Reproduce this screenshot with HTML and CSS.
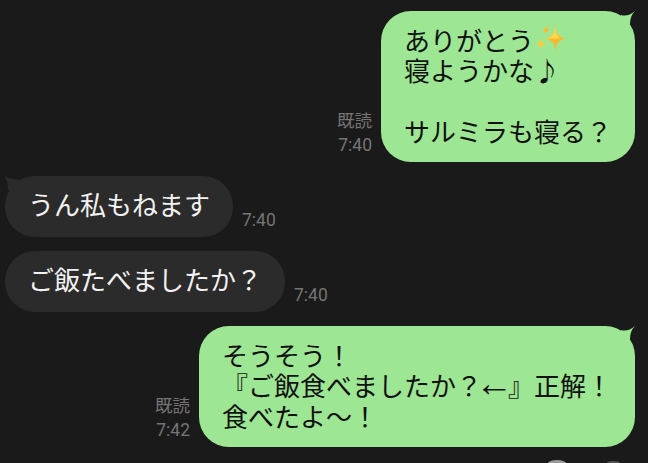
FILE: index.html
```html
<!DOCTYPE html>
<html lang="ja">
<head>
    <meta charset="UTF-8">
    <meta name="viewport" content="width=device-width, initial-scale=1.0">
    <title>トーク</title>
    <link rel="stylesheet" href="styles.css">
</head>
<body>
    <div class="chat">
        <div class="row row-me">
            <div class="meta">
                <div>既読</div>
                <div>7:40</div>
            </div>
            <div class="bubble bubble-me">
                <svg class="tail" width="16" height="14" viewBox="0 0 16 14"><path d="M2 5Q9 7 16 1 11 6 11 14L2 14Z" /></svg>
                <div>ありがとう<svg class="sparkle" width="30" height="29" viewBox="0 0 30 29"><path fill="#fdb92e" d="M19.500 0C20 9 21 12 29 14.500 21 17 20 20 19.500 28 19 20 17 17 10 14.500 17 12 19 9 19.500 0Z"/><path fill="#fed64a" d="M19.500 0C20 9 20.500 12 24 13.500L19.500 14.500 10 14.500C17 12 19 9 19.500 0Z"/><path fill="#fdb92e" d="M10 1C10.500 4 11 5 13.500 6 11 7 10.500 8 10 10.500 9.500 8 9 7 6.500 6 9 5 9.500 4 10 1Z"/><path fill="#fdc93a" d="M5 14C5.500 18 6.500 19 10.500 20 6.500 21 5.500 22 5 26 4.500 22 3.500 21 0 20 3.500 19 4.500 18 5 14Z"/></svg></div>
                <div>寝ようかな♪</div>
                <div>&nbsp;</div>
                <div>サルミラも寝る？</div>
            </div>
        </div>

        <div class="row">
            <div class="bubble bubble-them">
                <svg class="tail-left" width="16" height="14" viewBox="0 0 16 14"><path d="M0 0Q6 4 14 3L14 14 3 14Q3 6 0 0Z" /></svg>
                うん私もねます
            </div>
            <div class="meta meta-left">7:40</div>
        </div>

        <div class="row">
            <div class="bubble bubble-them">ご飯たべましたか？</div>
            <div class="meta meta-left">7:40</div>
        </div>

        <div class="row row-me">
            <div class="meta">
                <div>既読</div>
                <div>7:42</div>
            </div>
            <div class="bubble bubble-me">
                <svg class="tail" width="16" height="14" viewBox="0 0 16 14"><path d="M2 5Q9 7 16 1 11 6 11 14L2 14Z" /></svg>
                <div>そうそう！</div>
                <div>『ご飯食べましたか？<span class="arrow">←</span>』正解！</div>
                <div>食べたよ〜！</div>
            </div>
        </div>
    </div>
    <div class="peek peek-one"></div>
    <div class="peek peek-two"></div>
</body>
</html>
```

FILE: styles.css
```css
html, body {
    height: 100%;
}

body {
    margin: 0;
    background-color: #1a1a1a;
    font-family: "Noto Sans CJK JP", "Noto Sans", sans-serif;
    overflow: hidden;
    position: relative;
}

.chat {
    display: flex;
    flex-direction: column;
    gap: 14px;
    padding: 11px 13px 0 5px;
}

.row {
    display: flex;
    align-items: flex-end;
}

.row-me {
    justify-content: flex-end;
}

.bubble {
    position: relative;
    font-size: 26px;
    line-height: 30.4px;
}

.bubble-me {
    background-color: #9de693;
    color: #111;
    border-radius: 30px;
    padding: 14px 23px 15.400px 23px;
}

.bubble-them {
    background-color: #2b2b2b;
    color: #f2f2f2;
    border-radius: 30px;
    padding: 13px 23px 17.600px 23px;
}

.tail {
    position: absolute;
    top: -1px;
    right: 0;
    fill: #9de693;
}

.tail-left {
    position: absolute;
    top: 0;
    left: 0;
    fill: #2b2b2b;
}

.sparkle {
    vertical-align: 0;
    margin: -10px 0 -2px 2px;
}

.arrow {
    display: inline-block;
    width: 26px;
    margin: 0 7px 0 -7px;
    font-family: "Liberation Sans", sans-serif;
    font-size: 38px;
    line-height: 0;
}

.meta {
    color: #757575;
    font-family: Roboto, "Noto Sans CJK JP", sans-serif;
    font-size: 17.500px;
    line-height: 24px;
    text-align: right;
    margin-right: 9px;
    margin-bottom: 5px;
}

.meta-left {
    margin: 0 0 5px 9px;
}

.peek {
    position: absolute;
    bottom: 0;
    border-radius: 50% 50% 0 0 / 100% 100% 0 0;
}

.peek-one {
    left: 548px;
    width: 18px;
    height: 3px;
    background-color: #9a9a9a;
}

.peek-two {
    left: 607px;
    width: 13px;
    height: 2px;
    background-color: #555;
}
```
